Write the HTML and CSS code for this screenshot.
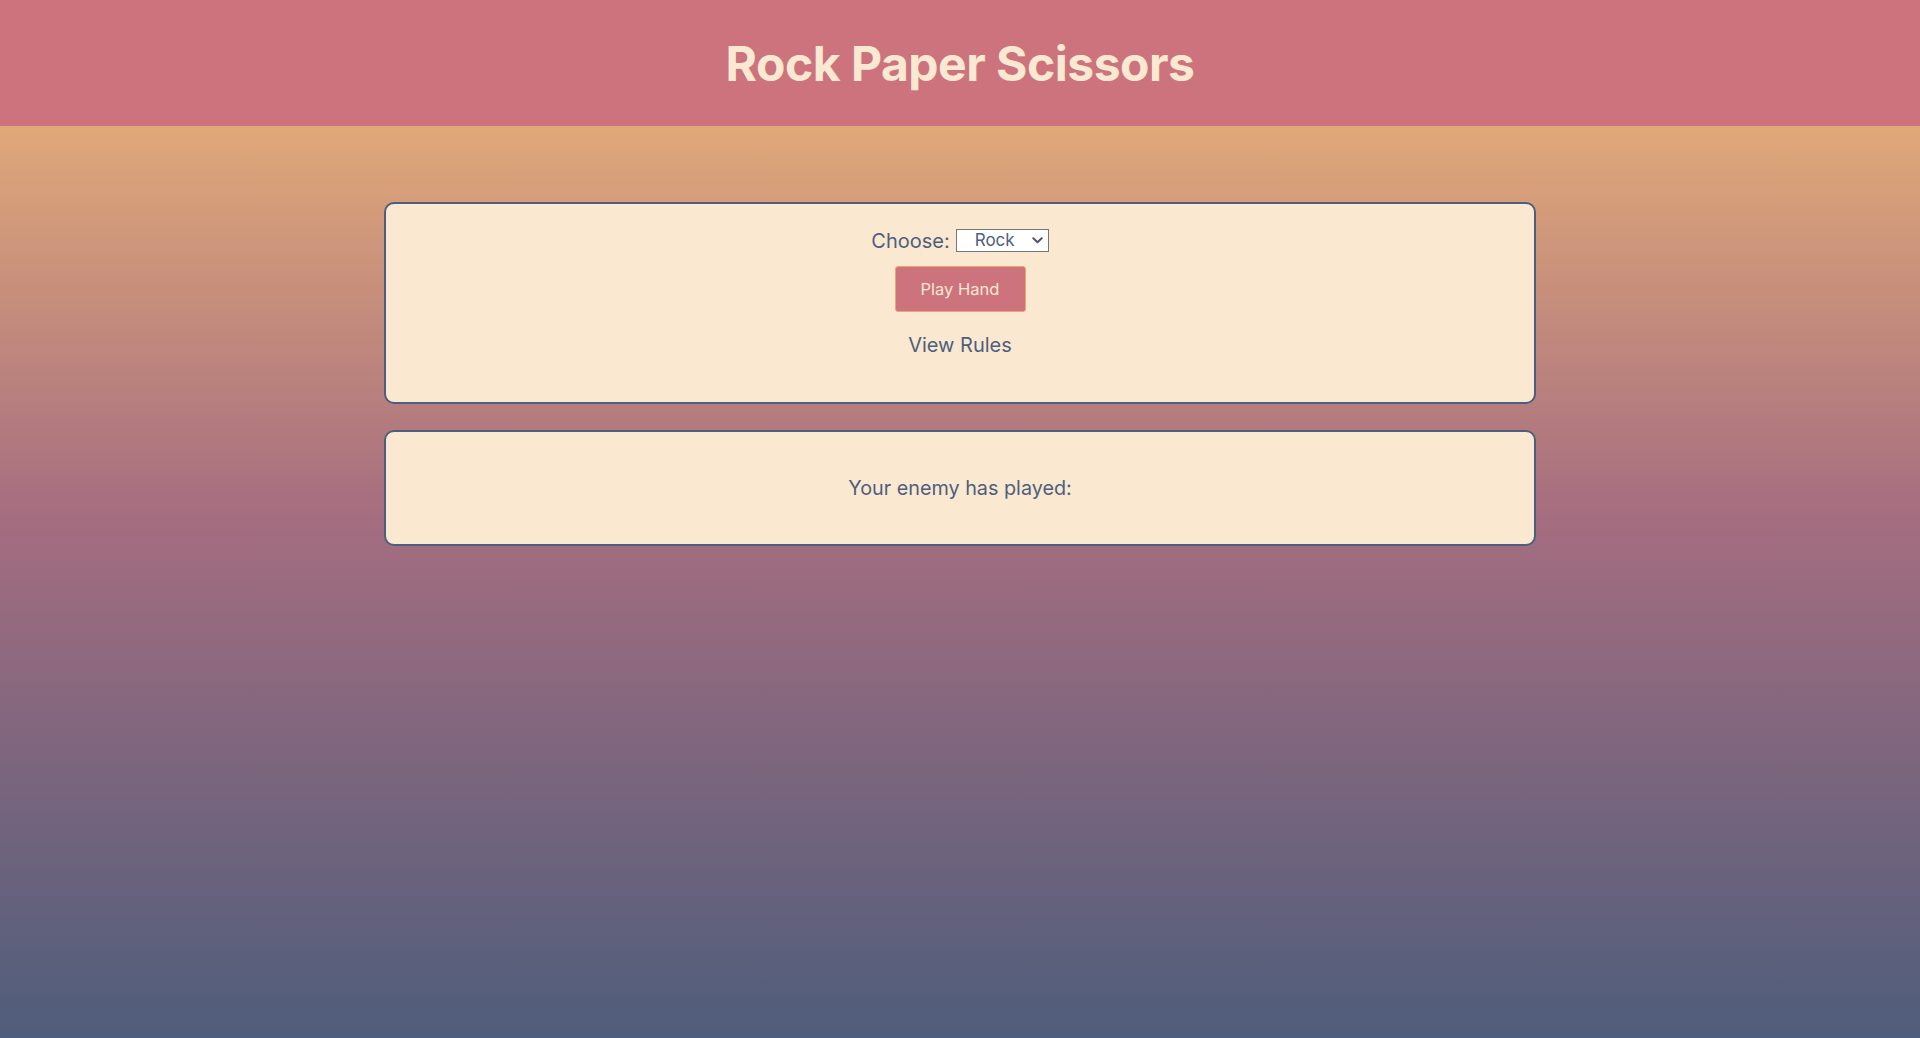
FILE: index.html
```html
<!DOCTYPE html>
<html lang="en">
<head>
<meta charset="utf-8">
<title>Rock Paper Scissors</title>
<link rel="stylesheet" href="styles.css">
</head>
<body>
<header class="site-header">
  <h1 class="title">Rock Paper Scissors</h1>
</header>
<main class="main">
  <section class="card card-play">
    <div class="choose-row">
      <label class="choose-label" for="hand">Choose:</label>
      <select class="hand-select" id="hand">
        <option>Rock</option>
        <option>Paper</option>
        <option>Scissors</option>
      </select>
    </div>
    <button class="play-btn" type="button">Play Hand</button>
    <div class="rules-link">View Rules</div>
  </section>
  <section class="card card-result">
    <p class="enemy-text">Your enemy has played:</p>
  </section>
</main>
</body>
</html>
```

FILE: styles.css
```css
html, body {
  margin: 0;
  padding: 0;
  height: 100%;
}
body {
  font-family: Inter, "Noto Sans", sans-serif;
  color: #4e5e7e;
  min-height: 1038px;
  display: flex;
  flex-direction: column;
}
.site-header {
  background: #cc737d;
  height: 126px;
  display: flex;
  align-items: center;
  justify-content: center;
}
.title {
  margin: 0;
  font-size: 48px;
  font-weight: 700;
  color: #fae9d2;
  letter-spacing: -0.5px;
  padding-top: 1px;
}
.main {
  flex: 1;
  background: linear-gradient(180deg, #e0a878 0%, #a56d80 43%, #4e5d7b 100%);
  padding-top: 76px;
  display: flex;
  flex-direction: column;
  align-items: center;
  gap: 26px;
}
.card {
  width: 60%;
  box-sizing: border-box;
  background: #fae8d0;
  border: 2px solid #4e5e7e;
  border-radius: 10px;
}
.card-play {
  height: 202px;
  display: flex;
  flex-direction: column;
  align-items: center;
  padding-top: 24px;
}
.choose-row {
  display: flex;
  align-items: center;
  gap: 6px;
  height: 25px;
}
.choose-label {
  font-size: 20px;
  color: #4e5e7e;
}
.hand-select {
  -webkit-appearance: none;
  appearance: none;
  width: 93px;
  height: 23px;
  box-sizing: border-box;
  font-family: Inter, "Noto Sans", sans-serif;
  font-size: 17px;
  line-height: 21px;
  color: #4e5e7e;
  background-color: #ffffff;
  background-image: url("data:image/svg+xml,%3Csvg xmlns='http://www.w3.org/2000/svg' width='11' height='7' viewBox='0 0 11 7'%3E%3Cpath d='M1.3 1.3 L5.5 5.3 L9.7 1.3' fill='none' stroke='%234e5570' stroke-width='2' stroke-linecap='round' stroke-linejoin='round'/%3E%3C/svg%3E");
  background-repeat: no-repeat;
  background-position: right 5px center;
  background-size: 11px 7px;
  border: 1px solid #767676;
  border-radius: 0;
  text-align: center;
  text-align-last: center;
  padding: 0 17px 0 2px;
}
.play-btn {
  margin-top: 13px;
  width: 131px;
  height: 46px;
  box-sizing: border-box;
  background: #cc737d;
  border: 1px solid #eaa96b;
  border-radius: 3px;
  color: #fae8d0;
  font-family: Inter, "Noto Sans", sans-serif;
  font-size: 16.5px;
}
.rules-link {
  margin-top: 21px;
  font-size: 20px;
  color: #4e5e7e;
}
.card-result {
  height: 116px;
  display: flex;
  align-items: center;
  justify-content: center;
}
.enemy-text {
  margin: 0;
  font-size: 19.8px;
  color: #4e5e7e;
}
```
